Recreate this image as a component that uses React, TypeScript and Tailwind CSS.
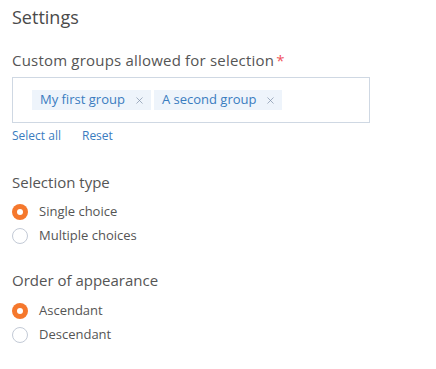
import { X } from "lucide-react";

const font = { fontFamily: '"Open Sans", "Noto Sans", sans-serif' };

function Radio({ label, checked }: { label: string; checked?: boolean }) {
  return (
    <label className="flex h-6 items-center gap-[11px]">
      {checked ? (
        <span className="flex h-4 w-4 items-center justify-center rounded-full bg-[#f5782d]">
          <span className="h-[6px] w-[6px] rounded-full bg-white" />
        </span>
      ) : (
        <span className="h-4 w-4 rounded-full border border-[#c3cad6] bg-white" />
      )}
      <span className="text-[13px] text-[#555]">{label}</span>
    </label>
  );
}

function Tag({ label }: { label: string }) {
  return (
    <span className="flex h-5 items-center gap-[9px] bg-[#eef4fb] pl-[8px] pr-[6px] text-[13px] text-[#3a7cc0]">
      {label}
      <X className="h-[11px] w-[11px] text-[#7d8fa6]" strokeWidth={1.5} />
    </span>
  );
}

export default function App() {
  return (
    <div className="bg-white px-3 pt-[6px]" style={font}>
      <h1 className="text-[18px] font-medium leading-[22px] text-[#4a4a4a]">Settings</h1>

      <div className="mt-[22px] text-[15px] leading-5 tracking-[0.2px] text-[#555]">
        Custom groups allowed for selection
        <span className="ml-[2px] text-[#f0545e]">*</span>
      </div>
      <div className="mt-[7px] flex h-[46px] w-[358px] items-center gap-[3px] border border-[#cfd8e3] pl-[19px]">
        <Tag label="My first group" />
        <Tag label="A second group" />
      </div>
      <div className="mt-[5px] flex gap-[21px] text-[12px] leading-4 text-[#3a7cc0]">
        <span>Select all</span>
        <span>Reset</span>
      </div>

      <div className="mt-[28px] text-[15px] leading-5 text-[#555]">Selection type</div>
      <div className="mt-[8px] flex flex-col">
        <Radio label="Single choice" checked />
        <Radio label="Multiple choices" />
      </div>

      <div className="mt-[22px] text-[15px] leading-5 text-[#555]">Order of appearance</div>
      <div className="mt-[9px] flex flex-col pb-6">
        <Radio label="Ascendant" checked />
        <Radio label="Descendant" />
      </div>
    </div>
  );
}
